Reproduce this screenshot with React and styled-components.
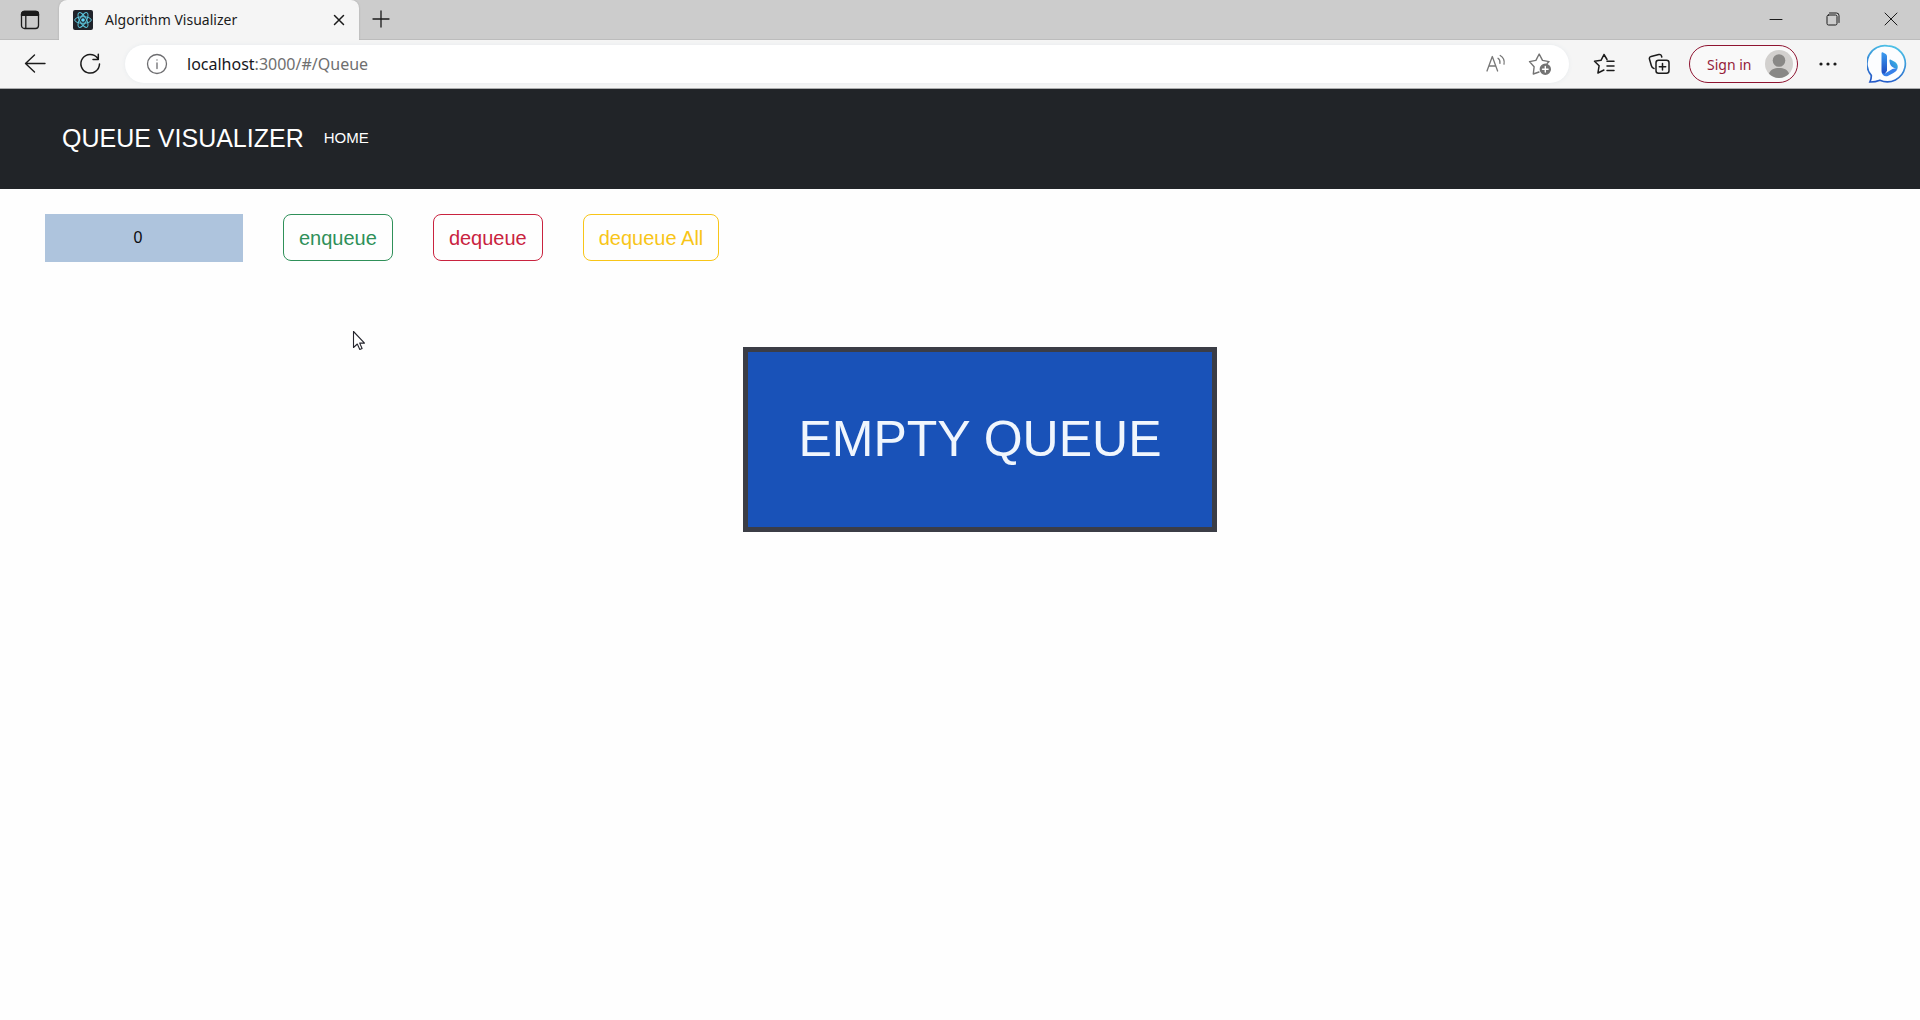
import React, { useState } from "react";
import styled, { createGlobalStyle } from "styled-components";

const uiFont = '"Noto Sans", "Open Sans", sans-serif';
const pageFont = '"Liberation Sans", Arial, sans-serif';

const GlobalStyle = createGlobalStyle`
  *, *::before, *::after { box-sizing: border-box; }
  body { margin: 0; background: #fefefe; font-family: ${pageFont}; }
  button, input { margin: 0; font: inherit; }
  svg { display: block; }
`;

const TitleBar = styled.header`
  display: flex;
  align-items: stretch;
  height: 40px;
  background: #cccccc;
  box-shadow: inset 0 -1px 0 #bcbcbc;
  font-family: ${uiFont};
`;

const IconButton = styled.button`
  display: flex;
  flex: none;
  align-items: center;
  justify-content: center;
  width: ${(p) => p.$width || 40}px;
  height: ${(p) => p.$height || 38}px;
  padding: 0;
  border: 0;
  background: none;
  color: ${(p) => p.$color || "#1b1b1b"};
`;

const Tab = styled.div`
  position: relative;
  display: flex;
  align-items: center;
  gap: 12px;
  width: 300px;
  height: 40px;
  padding-left: 14px;
  border-radius: 8px 8px 0 0;
  background: #f5f5f5;
  color: #1b1b1b;
  font-size: 14px;
  box-shadow: 0 0 2px #a4a4a4;
  clip-path: inset(0 -2px 0 -2px);
`;

const TabTitle = styled.span`
  flex: 1;
  line-height: 20px;
`;

const WindowControls = styled.div`
  display: flex;
  margin-left: auto;
`;

const Toolbar = styled.div`
  display: flex;
  align-items: center;
  height: 49px;
  padding: 0 4px 0 8px;
  border-bottom: 1px solid #aaabad;
  background: #f5f5f5;
  font-family: ${uiFont};
`;

const AddressBar = styled.div`
  display: flex;
  flex: 1;
  align-items: center;
  height: 38px;
  margin: 0 4px 0 8px;
  padding: 0 8px 0 12px;
  border-radius: 19px;
  background: #ffffff;
  box-shadow: 0 0 4px #e6eaed;
`;

const Address = styled.div`
  flex: 1;
  margin-left: 10px;
  color: #6f6f6f;
  font-size: 16px;
  line-height: 24px;
`;

const Host = styled.span`
  color: #16161c;
`;

const SignIn = styled.button`
  display: flex;
  flex: none;
  align-items: center;
  justify-content: space-between;
  width: 109px;
  height: 38px;
  margin-left: 6px;
  padding: 0 4px 0 17px;
  border: 1px solid #8f1431;
  border-radius: 19px;
  background: #f9f9f9;
  color: #951b38;
  font-size: 14px;
`;

const NavBar = styled.nav`
  display: flex;
  align-items: center;
  gap: 20px;
  height: 100px;
  padding: 0 62px 2px;
  background: #212428;
  text-transform: uppercase;
`;

const Brand = styled.h1`
  margin: 0;
  color: #ffffff;
  font-size: 25px;
  font-weight: 400;
  line-height: 36px;
`;

const NavLink = styled.a`
  color: #ffffff;
  font-size: 15px;
  line-height: 36px;
  text-decoration: none;
`;

const Controls = styled.form`
  display: flex;
  align-items: flex-start;
  gap: 40px;
  padding: 25px 45px 0;
`;

const ValueInput = styled.input`
  width: 198px;
  height: 48px;
  padding: 0 14px 0 2px;
  border: 0;
  border-radius: 0;
  background: #aec4dd;
  color: #0c0c10;
  font-size: 16px;
  text-align: center;
  appearance: textfield;

  &::-webkit-inner-spin-button { appearance: none; margin: 0; }
`;

const OutlineButton = styled.button`
  height: 47px;
  padding: 0 15px;
  border: 1px solid ${(p) => p.$color};
  border-radius: 8px;
  background: transparent;
  color: ${(p) => p.$color};
  font-size: 20px;
  line-height: 30px;
`;

const Stage = styled.section`
  display: flex;
  justify-content: center;
  padding: 85px 0 0 40px;
`;

const EmptyNotice = styled.div`
  padding: 50px;
  border: 5px solid #3b3d46;
  background: #1952b8;
  color: #f0f6fd;
  font-size: 50px;
  line-height: 75px;
`;

const Pointer = styled.svg`
  position: absolute;
  left: 352px;
  top: 330px;
  pointer-events: none;
`;

const Line = ({ size = 20, box = 20, width = 1.4, children }) => (
  <svg width={size} height={size} viewBox={`0 0 ${box} ${box}`} fill="none" stroke="currentColor" strokeWidth={width} strokeLinecap="round" strokeLinejoin="round" aria-hidden="true">
    {children}
  </svg>
);

const ReactLogo = () => (
  <svg width="20" height="20" viewBox="0 0 20 20" aria-hidden="true">
    <rect width="20" height="20" rx="2" fill="#20232a" />
    <g fill="none" stroke="#5cc4da" strokeWidth="1">
      <ellipse cx="10" cy="10" rx="8.3" ry="3.3" />
      <ellipse cx="10" cy="10" rx="8.3" ry="3.3" transform="rotate(60 10 10)" />
      <ellipse cx="10" cy="10" rx="8.3" ry="3.3" transform="rotate(120 10 10)" />
    </g>
    <circle cx="10" cy="10" r="1.8" fill="#61dafb" />
  </svg>
);

const BingLogo = () => (
  <svg width="40" height="40" viewBox="0 0 40 40" aria-hidden="true">
    <defs>
      <linearGradient id="bubble" x1="0.6" y1="0" x2="0.3" y2="1">
        <stop offset="0" stopColor="#4cc0e6" />
        <stop offset="1" stopColor="#2459c8" />
      </linearGradient>
      <linearGradient id="stem" x1="0" y1="0" x2="0" y2="1">
        <stop offset="0" stopColor="#3c9df0" />
        <stop offset="1" stopColor="#1c48c0" />
      </linearGradient>
      <linearGradient id="bowl" x1="1" y1="0" x2="0" y2="1">
        <stop offset="0" stopColor="#3cc0dc" />
        <stop offset="1" stopColor="#2e70e4" />
      </linearGradient>
    </defs>
    <path d="M20.500 1.800a18 18 0 1 1-7.600 34.400c-3 1.200-6.400 1.900-10 1.800 1.100-2.300 1.500-4.200 1.400-6.600A18 18 0 0 1 20.500 1.800Z" fill="#fcfdff" stroke="url(#bubble)" strokeWidth="1.7" />
    <path d="M14.5 9.2c0-1 .8-1.3 1.6-.8l2.7 1.7c.8.5 1.2 1.2 1.2 2.2v14.5l-2.6 3.6c-1.7 0-2.9-1.5-2.9-3.4Z" fill="url(#stem)" />
    <path d="M22.4 16.2c0-.7.7-.9 1.4-.5l3.8 2.1c3.3 1.8 4 5.5 2.3 8.2-1.4-1.7-3.9-2.3-5.4-3.7-1.5-1.5-2-4.2-2.1-6.1Z" fill="url(#bowl)" />
    <path d="M14.6 27.4c.5 1.8 2.4 2.6 4.3 1.5l6.5-3.8c2-1 3.5-.6 4.6.7-1 1.8-2.4 2.5-4 3.4l-4.7 2.5c-3.3 1.7-6.4-.6-6.7-4.3Z" fill="#3680ea" />
  </svg>
);

export default function App() {
  const [value, setValue] = useState("0");

  return (
    <>
      <GlobalStyle />
      <TitleBar>
        <IconButton $width={59} $height={40} aria-label="Tab actions">
          <Line width={1.3}>
            <rect x="1.5" y="1.5" width="17" height="17" rx="3" />
            <path d="M1.5 5.300V4A2.500 2.500 0 0 1 4 1.500h12A2.500 2.500 0 0 1 18.500 4v1.300Z" fill="currentColor" />
            <path d="M5.8 5v13" />
          </Line>
        </IconButton>
        <Tab>
          <ReactLogo />
          <TabTitle>Algorithm Visualizer</TabTitle>
          <IconButton $height={40} aria-label="Close tab">
            <Line size={12} box={12} width={1.5}><path d="m1.5 1.5 9 9m0-9-9 9" /></Line>
          </IconButton>
        </Tab>
        <IconButton $width={44} aria-label="New tab">
          <Line size={18} box={18} width={1.3}><path d="M9 1v16M1 9h16" /></Line>
        </IconButton>
        <WindowControls>
          <IconButton $width={56} aria-label="Minimize">
            <Line size={14} box={14} width={1}><path d="M1 7.5h12" /></Line>
          </IconButton>
          <IconButton $width={58} aria-label="Restore">
            <Line size={14} box={14} width={1}>
              <rect x="1" y="3" width="10" height="10" rx="1.5" />
              <path d="M3.5 1h7A2.5 2.5 0 0 1 13 3.5v7" />
            </Line>
          </IconButton>
          <IconButton $width={58} aria-label="Close window">
            <Line size={14} box={14} width={1}><path d="m1 1 12 12M13 1 1 13" /></Line>
          </IconButton>
        </WindowControls>
      </TitleBar>

      <Toolbar>
        <IconButton $width={54} aria-label="Back">
          <Line size={22} box={22} width={1.4}><path d="M21 10.5H1.5M10.5 2l-9 8.5 9 8.5" /></Line>
        </IconButton>
        <IconButton $width={55} aria-label="Refresh">
          <Line size={22} box={22} width={1.5}><path d="M18.5 5A9.3 9.3 0 1 0 20.5 11M19.3 1.2v5.3H14" /></Line>
        </IconButton>
        <AddressBar>
          <IconButton aria-label="Site information" $color="#6d6d70">
            <Line size={22} box={22} width={1.3}>
              <circle cx="11" cy="11" r="9.5" />
              <path d="M11 10v5.5M11 6.8v.3" />
            </Line>
          </IconButton>
          <Address><Host>localhost</Host>:3000/#/Queue</Address>
          <IconButton $width={46} aria-label="Read aloud" $color="#777777">
            <Line width={1.3}>
              <path d="m1 17 5.3-14.5L11.6 17M3 12h6.8M12 4.3c1.7 1.2 2.2 3 1.9 5M14.2 1.5c3.3 2 4.5 5 3.8 8.7" />
            </Line>
          </IconButton>
          <IconButton $width={42} aria-label="Add to favorites" $color="#737373">
            <Line size={24} box={24} width={1.4}>
              <path d="M11 20 5.3 22l.8-7.2L1.5 9.6l6.4-1.2L11.2 2l3.3 6.4 6.6 1.2-2 2" />
              <circle cx="17.3" cy="17.3" r="5" fill="currentColor" />
              <path d="M17.3 14.5v5.6M14.5 17.3h5.6" stroke="#ffffff" />
            </Line>
          </IconButton>
        </AddressBar>
        <IconButton $width={62} aria-label="Favorites">
          <Line size={22} box={22} width={1.5}>
            <path d="M14 6.500 11 1.500 8 7.300l-6.500.9 4.600 4.600-1.200 7.200 6-3M14 8.300h7M14 13h7M14 17.500h7" />
          </Line>
        </IconButton>
        <IconButton $width={48} aria-label="Collections">
          <Line size={22} box={22} width={1.5}>
            <rect x="8" y="7.2" width="13" height="13" rx="2.5" />
            <path d="M14.5 10.5v6.4M11.3 13.7h6.4M6 15.5c-1.7-.3-2.2-1.3-2.6-2.8L1.5 6.2c-.4-1.4.2-2.4 1.6-2.8L10.8 1.500c1.600-.4 2.500.2 3 2.500" />
          </Line>
        </IconButton>
        <SignIn>
          Sign in
          <svg width="28" height="28" viewBox="0 0 28 28" aria-hidden="true">
            <circle cx="14" cy="14" r="14" fill="#d2d0ce" />
            <circle cx="14" cy="10.5" r="6.3" fill="#898886" />
            <path d="M4 23.8C5.5 19.5 9 18 14 18s8.5 1.5 10 5.8A14 14 0 0 1 4 23.8Z" fill="#898886" />
          </svg>
        </SignIn>
        <IconButton $width={60} aria-label="Settings and more">
          <svg width="18" height="4" viewBox="0 0 18 4" fill="currentColor" aria-hidden="true">
            <circle cx="2" cy="2" r="1.6" /><circle cx="9" cy="2" r="1.6" /><circle cx="16" cy="2" r="1.6" />
          </svg>
        </IconButton>
        <IconButton $width={58} aria-label="Discover"><BingLogo /></IconButton>
      </Toolbar>

      <NavBar>
        <Brand>Queue Visualizer</Brand>
        <NavLink href="#/">Home</NavLink>
      </NavBar>
      <main>
        <Controls onSubmit={(e) => e.preventDefault()}>
          <ValueInput type="number" aria-label="Value" value={value} onChange={(e) => setValue(e.target.value)} />
          <OutlineButton type="submit" $color="#2f9059">enqueue</OutlineButton>
          <OutlineButton type="button" $color="#c9233f">dequeue</OutlineButton>
          <OutlineButton type="button" $color="#f8c518">dequeue All</OutlineButton>
        </Controls>
        <Stage>
          <EmptyNotice>EMPTY QUEUE</EmptyNotice>
        </Stage>
      </main>
      <Pointer width="14" height="22" viewBox="0 0 14 22" aria-hidden="true">
        <path d="M1.5 1.5v16l3.8-3.5 2.5 5.5 2.3-1-2.4-5.4h4.8Z" fill="#ffffff" stroke="#24242c" strokeWidth="1.1" strokeLinejoin="round" />
      </Pointer>
    </>
  );
}
